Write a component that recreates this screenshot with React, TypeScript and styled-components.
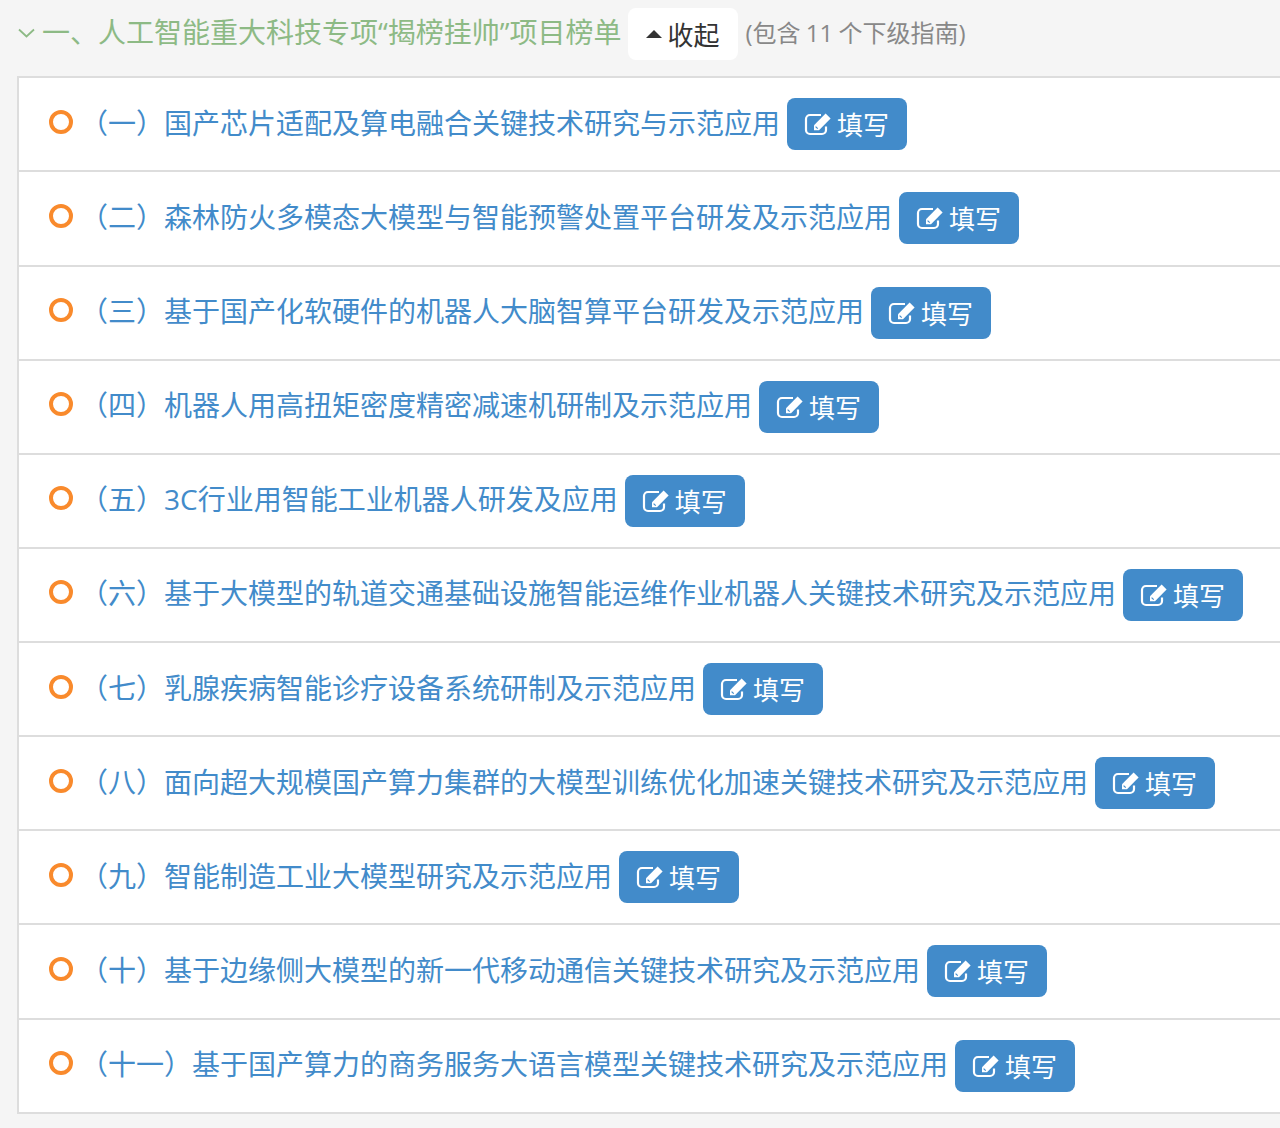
import { FC } from "react";
import styled, { createGlobalStyle } from "styled-components";

const guides = [
	"（一）国产芯片适配及算电融合关键技术研究与示范应用",
	"（二）森林防火多模态大模型与智能预警处置平台研发及示范应用",
	"（三）基于国产化软硬件的机器人大脑智算平台研发及示范应用",
	"（四）机器人用高扭矩密度精密减速机研制及示范应用",
	"（五）3C行业用智能工业机器人研发及应用",
	"（六）基于大模型的轨道交通基础设施智能运维作业机器人关键技术研究及示范应用",
	"（七）乳腺疾病智能诊疗设备系统研制及示范应用",
	"（八）面向超大规模国产算力集群的大模型训练优化加速关键技术研究及示范应用",
	"（九）智能制造工业大模型研究及示范应用",
	"（十）基于边缘侧大模型的新一代移动通信关键技术研究及示范应用",
	"（十一）基于国产算力的商务服务大语言模型关键技术研究及示范应用",
];

const EditIcon: FC = () => (
	<svg viewBox="0 0 28 24" aria-hidden="true">
		<path
			d="M22 14.5v3.5a4 4 0 0 1-4 4H6a4 4 0 0 1-4-4V7a4 4 0 0 1 4-4h11"
			fill="none"
			stroke="currentColor"
			strokeWidth="2.2"
		/>
		<path d="M10 13.2 21.6 1.6 26.6 6.6 15 18.2H10Z" fill="currentColor" />
		<path d="M11.6 14.6 13.7 16.7" stroke="#428bca" strokeWidth="1.2" />
	</svg>
);

const App: FC = () => {
	return (
		<>
			<GlobalStyle />
			<Page>
				<Header>
					<Chevron viewBox="0 0 16 10" aria-hidden="true">
						<path d="M.5 1.5 8 8.5l7.500-7" />
					</Chevron>
					<Title>一、人工智能重大科技专项“揭榜挂帅”项目榜单</Title>
					<CollapseButton type="button">
						<Triangle />
						收起
					</CollapseButton>
					<Hint>(包含 11 个下级指南)</Hint>
				</Header>

				<List>
					{guides.map((guide) => (
						<Row key={guide}>
							<Ring />
							<GuideName>{guide}</GuideName>
							<FillButton type="button">
								<EditIcon />
								填写
							</FillButton>
						</Row>
					))}
				</List>
			</Page>
		</>
	);
};

export default App;

const GlobalStyle = createGlobalStyle`
	html,
	body {
		margin: 0;
		padding: 0;
		background-color: #f5f5f5;
		overflow: hidden;
	}

	* {
		box-sizing: border-box;
	}
`;

const Page = styled.div`
	width: 1280px;
	height: 1128px;
	overflow: hidden;
	padding-top: 8px;
	background-color: #f5f5f5;
	font-family: "Open Sans", "Noto Sans CJK SC", sans-serif;
`;

const Header = styled.div`
	height: 52px;
	display: flex;
	align-items: center;
	padding-left: 18px;
`;

const Chevron = styled.svg`
	width: 17px;
	height: 10px;
	margin-top: -2px;
	margin-right: 7px;
	fill: none;
	stroke: #8dba85;
	stroke-width: 1.8;
`;

const Title = styled.span`
	font-size: 28px;
	line-height: 52px;
	margin-top: -5px;
	color: #8dba85;
	white-space: nowrap;
`;

const CollapseButton = styled.button`
	width: 110px;
	height: 52px;
	margin-left: 6px;
	display: flex;
	align-items: center;
	justify-content: center;
	gap: 6px;
	border: none;
	border-radius: 8px;
	padding: 0;
	font-family: inherit;
	font-size: 26px;
	color: #333;
	background-color: #fff;
`;

const Triangle = styled.i`
	width: 0;
	height: 0;
	border-left: 8px solid transparent;
	border-right: 8px solid transparent;
	border-bottom: 8px solid #333;
`;

const Hint = styled.span`
	margin-left: 8px;
	margin-top: -5px;
	font-size: 24px;
	word-spacing: -1px;
	color: #888;
	white-space: nowrap;
`;

const List = styled.ul`
	list-style: none;
	width: 1300px;
	margin: 16.31px 0 0 17px;
	padding: 0;
	border-left: 2px solid #ddd;
	border-bottom: 2px solid #ddd;
	background-color: #fff;
`;

const Row = styled.li`
	height: 94.13px;
	display: flex;
	align-items: center;
	border-top: 2px solid #ddd;
	padding-left: 30px;
`;

const Ring = styled.span`
	flex: none;
	width: 24px;
	height: 24px;
	margin-top: -5px;
	margin-right: 7px;
	border: 4px solid #f98a2c;
	border-radius: 50%;
`;

const GuideName = styled.span`
	margin-top: -5px;
	font-size: 28px;
	color: #428bca;
	white-space: nowrap;
`;

const FillButton = styled.button`
	flex: none;
	width: 120px;
	height: 52px;
	margin-left: 7px;
	display: flex;
	align-items: center;
	gap: 5px;
	border: none;
	border-radius: 8px;
	padding: 0 0 0 17px;
	font-family: inherit;
	font-size: 26px;
	color: #fff;
	background-color: #428bca;

	svg {
		flex: none;
		width: 28px;
		height: 24px;
	}
`;
